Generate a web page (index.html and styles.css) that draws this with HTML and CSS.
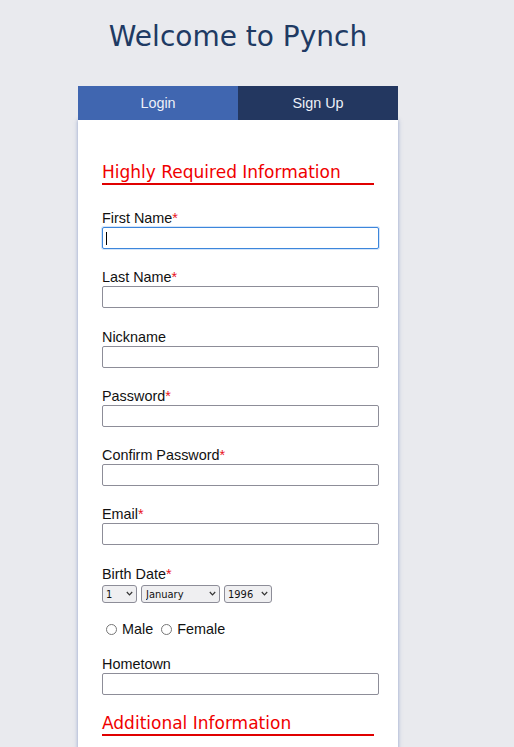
FILE: index.html
```html
<!DOCTYPE html>
<html>
<head>
<meta charset="utf-8">
<title>Pynch</title>
<link rel="stylesheet" href="styles.css">
</head>
<body>
<div class="page">
  <h1 class="title">Welcome to Pynch</h1>
  <div class="card">
    <div class="tabs">
      <div class="tab tab-login">Login</div>
      <div class="tab tab-signup">Sign Up</div>
    </div>
    <form class="form">
      <h2 class="section">Highly Required Information</h2>
      <div class="group">
        <label class="label">First Name<span class="req">*</span></label>
        <div class="field-wrap"><input class="field field-focus" type="text"><span class="caret"></span></div>
      </div>
      <div class="group">
        <label class="label">Last Name<span class="req">*</span></label>
        <input class="field" type="text">
      </div>
      <div class="group">
        <label class="label">Nickname</label>
        <input class="field" type="text">
      </div>
      <div class="group">
        <label class="label">Password<span class="req">*</span></label>
        <input class="field" type="password">
      </div>
      <div class="group">
        <label class="label">Confirm Password<span class="req">*</span></label>
        <input class="field" type="password">
      </div>
      <div class="group">
        <label class="label">Email<span class="req">*</span></label>
        <input class="field" type="text">
      </div>
      <div class="group-date">
        <label class="label">Birth Date<span class="req">*</span></label>
        <div class="selects">
          <span class="sel-wrap sel-day">
            <select class="sel"><option>1</option></select>
            <svg class="chev" width="7" height="5" viewBox="0 0 7 5"><path d="M0.8 1 L3.5 3.8 L6.2 1" fill="none" stroke="#333" stroke-width="1.2"/></svg>
          </span>
          <span class="sel-wrap sel-month">
            <select class="sel"><option>January</option></select>
            <svg class="chev" width="7" height="5" viewBox="0 0 7 5"><path d="M0.8 1 L3.5 3.8 L6.2 1" fill="none" stroke="#333" stroke-width="1.2"/></svg>
          </span>
          <span class="sel-wrap sel-year">
            <select class="sel"><option>1996</option></select>
            <svg class="chev" width="7" height="5" viewBox="0 0 7 5"><path d="M0.8 1 L3.5 3.8 L6.2 1" fill="none" stroke="#333" stroke-width="1.2"/></svg>
          </span>
        </div>
      </div>
      <div class="gender">
        <input class="radio" type="radio" name="g"><span class="radio-text">Male</span>
        <input class="radio" type="radio" name="g"><span class="radio-text">Female</span>
      </div>
      <div class="group group-last">
        <label class="label">Hometown</label>
        <input class="field" type="text">
      </div>
      <h2 class="section">Additional Information</h2>
    </form>
  </div>
</div>
</body>
</html>
```
FILE: styles.css
```css
html, body {
  margin: 0;
  padding: 0;
  background: #e9eaee;
}
.page {
  width: 320px;
  margin-left: 78px;
  padding-top: 20px;
}
.title {
  margin: 0;
  font-family: "DejaVu Sans", sans-serif;
  font-weight: normal;
  font-size: 28px;
  line-height: 33px;
  color: #203a63;
  text-align: center;
}
.card {
  margin-top: 33px;
}
.tabs {
  display: flex;
  height: 34px;
  position: relative;
  z-index: 1;
}
.tab {
  flex: 1;
  display: flex;
  align-items: center;
  justify-content: center;
  font-family: "Liberation Sans", Arial, sans-serif;
  font-size: 14.4px;
  color: #eef1f8;
}
.tab-login { background: #4066b0; }
.tab-signup { background: #233760; }
.form {
  background: #ffffff;
  padding: 42px 24px 20px 24px;
  box-shadow: 0 0 4px rgba(70, 100, 170, 0.55);
  height: 700px;
}
.section {
  margin: 0;
  font-family: "DejaVu Sans", sans-serif;
  font-weight: normal;
  font-size: 17px;
  line-height: 20px;
  color: #f00000;
  border-bottom: 2px solid #e00000;
  padding-bottom: 1px;
  margin-bottom: 25px;
}
.group {
  margin-bottom: 20.3px;
}
.group-last {
  margin-bottom: 18.3px;
}
.label {
  display: block;
  font-family: "Liberation Sans", Arial, sans-serif;
  font-size: 14.4px;
  line-height: 17px;
  color: #111111;
}
.req {
  color: #e8141c;
}
.field-wrap {
  position: relative;
  width: 277px;
}
.field {
  display: block;
  box-sizing: border-box;
  width: 277px;
  height: 22px;
  margin: 0;
  border: 1px solid #8d8d98;
  border-radius: 2px;
  background: #ffffff;
  outline: none;
  padding: 1px 2px;
}
.field-focus {
  border-color: #3d86db;
  box-shadow: 0 0 0 1px #d4e5fa;
}
.caret {
  position: absolute;
  left: 4px;
  top: 5px;
  width: 1px;
  height: 13px;
  background: #000000;
}
.group-date {
  margin-bottom: 19px;
}
.selects {
  display: flex;
  gap: 4px;
  margin-top: 1px;
}
.sel-wrap {
  position: relative;
  display: block;
  height: 18px;
}
.sel {
  -webkit-appearance: none;
  appearance: none;
  box-sizing: border-box;
  width: 100%;
  height: 18px;
  margin: 0;
  font-family: "DejaVu Sans Condensed", "DejaVu Sans", sans-serif;
  font-size: 11px;
  border: 1px solid #8d8d98;
  border-radius: 3px;
  background: #efeff1;
  color: #111111;
  padding: 0 0 0 3px;
}
.sel-month .sel { padding-left: 4px; }
.chev {
  position: absolute;
  right: 4px;
  top: 7px;
  pointer-events: none;
}
.sel-day { width: 35px; }
.sel-month { width: 79px; }
.sel-year { width: 48px; }
.gender {
  display: flex;
  align-items: center;
  height: 17px;
  margin-bottom: 17.8px;
  font-family: "Liberation Sans", Arial, sans-serif;
  font-size: 14.4px;
  color: #111111;
}
.radio {
  width: 11px;
  height: 11px;
  margin: 0 5px 0 4px;
}
.radio-text {
  margin-right: 4px;
}
```
